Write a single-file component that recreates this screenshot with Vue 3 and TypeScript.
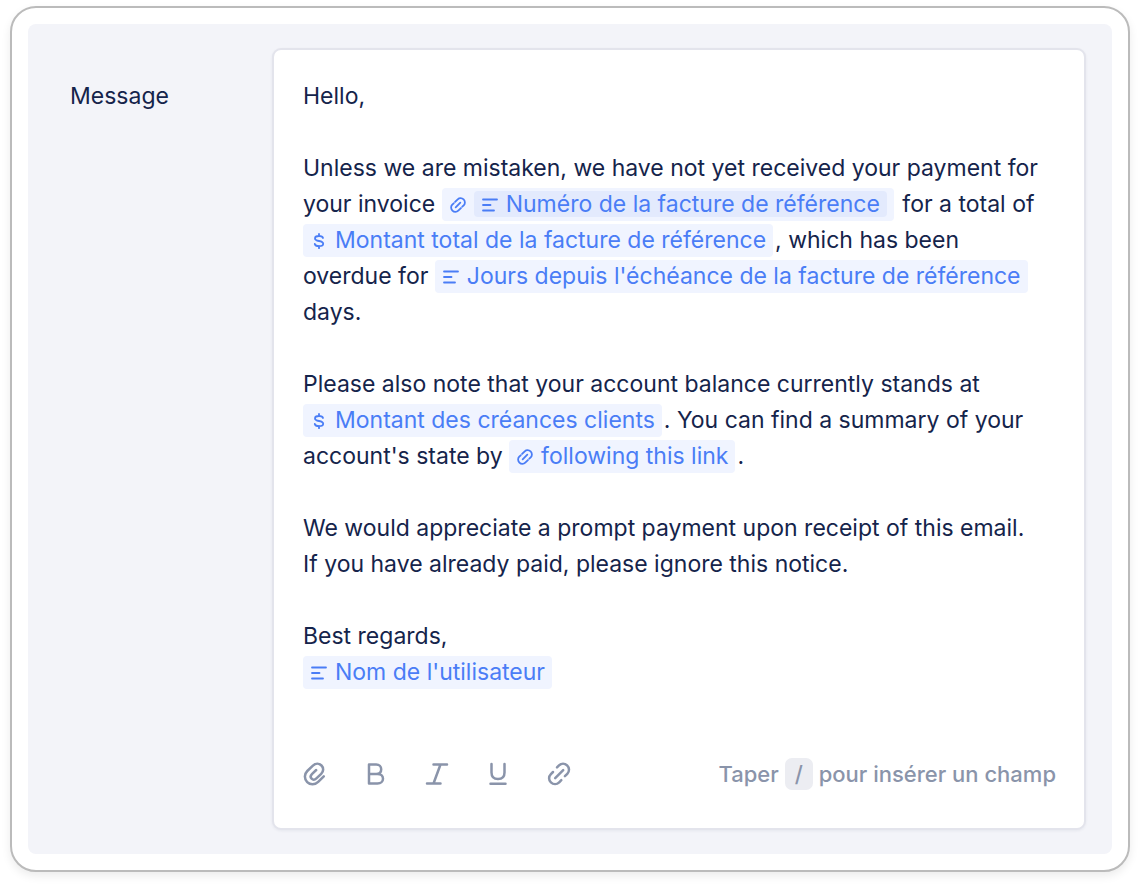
<script setup lang="ts">
import { h, type FunctionalComponent } from 'vue'

type IconName = 'text' | 'money' | 'link' | 'clip' | 'bold' | 'italic' | 'underline' | 'chain'

const icons: Record<IconName, { box: string; stroke: number; d: string }> = {
  text: { box: '0 0 16 16', stroke: 1.8, d: 'M1 2.5H15M1 8H8.5M1 13.5H12' },
  money: {
    box: '0 0 16 16',
    stroke: 1.8,
    d: 'M12 5C11.6 3.6 10 3 8 3C5.6 3 4 3.9 4 5.4C4 7 5.6 7.5 8 8C10.6 8.5 12.2 9.2 12.2 10.8C12.2 12.3 10.5 13.2 8 13.2C5.8 13.2 4.1 12.5 3.8 11M8 1V3M8 13V15.2',
  },
  link: {
    box: '0 0 24 24',
    stroke: 2.7,
    d: 'M8.5 15.5L15.5 8.5M7.6 7.4L11.6 3.4C13.9 1.1 17.8 1 20.4 3.6C23 6.2 22.9 10.1 20.6 12.4L18.4 14.6M5.6 9.4L3.4 11.6C1.1 13.9 1 17.8 3.6 20.4C6.2 23 10.1 22.9 12.4 20.6L16.4 16.6',
  },
  clip: {
    box: '0 0 24 24',
    stroke: 2.5,
    d: 'M20.8 14.4L15.2 19.8C11.8 23.1 7.2 23 4.2 20.1C1.1 17 1.1 12.2 4.3 9L9.9 3.6C12.5 1.1 16.2 1.2 18.5 3.5C20.8 5.8 20.7 9.4 18.2 11.8L13.4 16.4C11.8 17.9 9.9 18 8.6 16.7C7.3 15.4 7.4 13.6 8.9 12.1L13.2 8',
  },
  bold: {
    box: '0 0 24 24',
    stroke: 2.5,
    d: 'M5 2.5V21.5H13.5C16.8 21.5 19 19.4 19 16.7C19 13.9 16.8 12 13.5 12H5M5 2.5H12.2C15.3 2.5 17.2 4.5 17.2 7.2C17.2 10 15.3 12 12.2 12',
  },
  italic: { box: '0 0 24 24', stroke: 2.5, d: 'M8.5 2.5H22M2 21.5H15.5M15.5 2.5L8.5 21.5' },
  underline: {
    box: '0 0 24 24',
    stroke: 2.5,
    d: 'M5.5 2V10.5C5.5 14.6 8 17 12 17C16 17 18.5 14.6 18.5 10.5V2M4.5 21.8H19.5',
  },
  chain: {
    box: '0 0 24 24',
    stroke: 2.5,
    d: 'M8.2 16.2L16.2 8.2M10 5.4L12 3.4C14.3 1.1 17.8 1.1 20.1 3.4C22.6 5.8 22.6 9.5 20.3 11.8L17.9 14.2M6 10L3.9 12.1C1.5 14.5 1.5 18.1 3.9 20.4C6.3 22.7 9.8 22.7 12.2 20.3L14.3 18.2',
  },
}

const Icon: FunctionalComponent<{ name: IconName }> = (props) => {
  const icon = icons[props.name]
  return h(
    'svg',
    {
      viewBox: icon.box,
      fill: 'none',
      stroke: 'currentColor',
      'stroke-width': icon.stroke,
      'stroke-linecap': 'round',
      'stroke-linejoin': 'round',
      'aria-hidden': 'true',
    },
    [h('path', { d: icon.d })],
  )
}
Icon.props = ['name']

const tools: { icon: IconName; label: string }[] = [
  { icon: 'clip', label: 'Joindre un fichier' },
  { icon: 'bold', label: 'Gras' },
  { icon: 'italic', label: 'Italique' },
  { icon: 'underline', label: 'Souligné' },
  { icon: 'chain', label: 'Lien' },
]
</script>

<template>
  <main class="card">
    <div class="panel">
      <span id="message-label" class="label">Message</span>
      <section class="editor">
        <div class="body" role="textbox" aria-multiline="true" aria-labelledby="message-label" contenteditable="true" spellcheck="false">
          <p>Hello,</p>
          <p>
            Unless we are mistaken, we have not yet received your payment for<br />
            your invoice
            <span class="chip"><Icon class="glyph" name="link" /><span class="chip-inner"><Icon class="glyph" name="text" />Numéro de la facture de référence</span></span>
            for a total of<br />
            <span class="chip"><Icon class="glyph" name="money" />Montant total de la facture de référence</span>, which has been<br />
            overdue for
            <span class="chip"><Icon class="glyph" name="text" />Jours depuis l'échéance de la facture de référence</span><br />
            days.
          </p>
          <p>
            Please also note that your account balance currently stands at<br />
            <span class="chip"><Icon class="glyph" name="money" />Montant des créances clients</span>. You can find a summary of your<br />
            account's state by
            <span class="chip"><Icon class="glyph" name="link" />following this link</span>.
          </p>
          <p>
            We would appreciate a prompt payment upon receipt of this email.<br />
            If you have already paid, please ignore this notice.
          </p>
          <p>
            Best regards,<br />
            <span class="chip"><Icon class="glyph" name="text" />Nom de l'utilisateur</span>
          </p>
        </div>
        <footer class="footer">
          <div class="tools" role="toolbar" aria-label="Mise en forme">
            <button v-for="tool in tools" :key="tool.icon" type="button" class="tool" :aria-label="tool.label">
              <Icon :name="tool.icon" />
            </button>
          </div>
          <div class="hint">Taper <kbd>/</kbd> pour insérer un champ</div>
        </footer>
      </section>
    </div>
  </main>
</template>

<style>
body {
  background: #fff;
}
</style>

<style scoped>
.card {
  margin: 6px 10px 14px;
  padding: 16px;
  border: 2px solid #bbb;
  border-radius: 26px;
  background: #fff;
  box-shadow: 0 4px 10px rgba(0, 0, 0, 0.08);
  font-family: Inter, "Liberation Sans", sans-serif;
  font-size: 23px;
  line-height: 36px;
  color: #15244b;
}

.panel {
  display: grid;
  grid-template-columns: 202px minmax(0, 1fr);
  padding: 24px 26px 24px 42px;
  border-radius: 8px;
  background: #f3f4f9;
}

.label {
  padding-top: 30px;
}

.editor {
  border: 2px solid #e3e4ec;
  border-radius: 9px;
  padding: 28px 28px 36px 29px;
  background: #fff;
  box-shadow: 0 1px 3px rgba(21, 36, 75, 0.06);
}

.body {
  outline: none;
}

.body p {
  margin: 0 0 36px;
}

.chip {
  padding: 2px 7px 3px 8px;
  margin-right: 2px;
  border-radius: 4px;
  background: #f0f4ff;
  color: #4a7df6;
  white-space: nowrap;
}

.glyph {
  width: 16px;
  height: 16px;
  margin-right: 8px;
  vertical-align: -1px;
}

.chip-inner {
  display: inline-block;
  padding: 0 7px 0 8px;
  border-radius: 4px;
  background: #e3eafd;
  line-height: 26px;
}

.footer {
  display: flex;
  align-items: center;
  justify-content: space-between;
  padding-top: 30px;
}

.tools {
  display: flex;
  gap: 37px;
}

.tool {
  display: flex;
  padding: 0;
  border: 0;
  background: none;
  color: #8a94aa;
}

.tool svg {
  width: 24px;
  height: 24px;
}

.hint {
  font-size: 22px;
  font-weight: 500;
  color: #8a94aa;
}

kbd {
  display: inline-block;
  padding: 0 10px;
  border-radius: 7px;
  background: #ecedf2;
  font: inherit;
  line-height: 32px;
}
</style>
